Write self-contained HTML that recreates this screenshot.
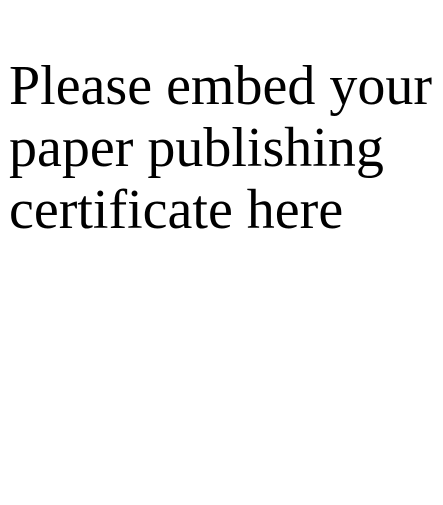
<!DOCTYPE html>
<html><head><style>
html,body{margin:0;padding:0;background:#fff;width:443px;height:505px;overflow:hidden}
div{position:absolute;left:9px;top:55px;width:434px;font-family:"Liberation Serif",serif;font-size:56px;line-height:62px;color:#000}
</style></head><body>
<div>Please embed your paper publishing certificate here</div>
</body></html>
